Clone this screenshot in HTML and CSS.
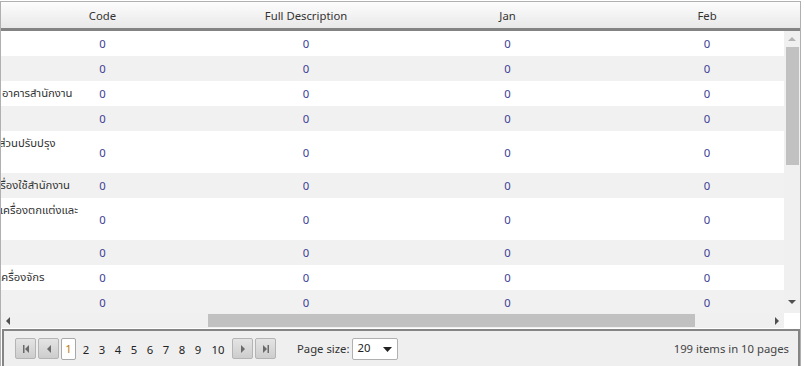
FILE: index.html
```html
<!DOCTYPE html>
<html>
<head>
<meta charset="utf-8">
<link rel="stylesheet" href="styles.css">
</head>
<body>
<div class="grid">
  <div class="head">
    <div class="hc c1">Code</div>
    <div class="hc c2">Full Description</div>
    <div class="hc c3">Jan</div>
    <div class="hc c4">Feb</div>
  </div>
  <div class="middle">
    <div class="viewport">
      <div class="row"><div class="txt"></div><div class="v c1">0</div><div class="v c2">0</div><div class="v c3">0</div><div class="v c4">0</div></div>
      <div class="row alt"><div class="txt"></div><div class="v c1">0</div><div class="v c2">0</div><div class="v c3">0</div><div class="v c4">0</div></div>
      <div class="row"><div class="txt"><span class="t0">อาคารสำนักงาน</span></div><div class="v c1">0</div><div class="v c2">0</div><div class="v c3">0</div><div class="v c4">0</div></div>
      <div class="row alt"><div class="txt"></div><div class="v c1">0</div><div class="v c2">0</div><div class="v c3">0</div><div class="v c4">0</div></div>
      <div class="row tall"><div class="txt top"><span class="t1">ส่วนปรับปรุง</span></div><div class="v c1">0</div><div class="v c2">0</div><div class="v c3">0</div><div class="v c4">0</div></div>
      <div class="row alt"><div class="txt"><span class="t2">เรื่องใช้สำนักงาน</span></div><div class="v c1">0</div><div class="v c2">0</div><div class="v c3">0</div><div class="v c4">0</div></div>
      <div class="row tall"><div class="txt top"><span class="t3">ะเครื่องตกแต่งและ</span></div><div class="v c1">0</div><div class="v c2">0</div><div class="v c3">0</div><div class="v c4">0</div></div>
      <div class="row alt"><div class="txt"></div><div class="v c1">0</div><div class="v c2">0</div><div class="v c3">0</div><div class="v c4">0</div></div>
      <div class="row"><div class="txt"><span class="t4">เครื่องจักร</span></div><div class="v c1">0</div><div class="v c2">0</div><div class="v c3">0</div><div class="v c4">0</div></div>
      <div class="row alt"><div class="txt"></div><div class="v c1">0</div><div class="v c2">0</div><div class="v c3">0</div><div class="v c4">0</div></div>
    </div>
    <div class="vscroll">
      <svg class="arr up" width="10" height="6" viewBox="0 0 10 6"><path d="M1 5 L5 1 L9 5 Z" fill="#b4b4b4"/></svg>
      <div class="vthumb"></div>
      <div class="vfill"></div>
      <svg class="arr down" width="10" height="6" viewBox="0 0 10 6"><path d="M1 1 L9 1 L5 5 Z" fill="#505050"/></svg>
    </div>
  </div>
  <div class="hscroll">
    <div class="htrack">
      <svg class="harr" width="6" height="10" viewBox="0 0 6 10"><path d="M5 1 L5 9 L1 5 Z" fill="#505050"/></svg>
      <div class="hgap1"></div>
      <div class="hthumb"></div>
      <div class="hgap2"></div>
      <svg class="harr" width="6" height="10" viewBox="0 0 6 10"><path d="M1 1 L5 5 L1 9 Z" fill="#505050"/></svg>
    </div>
    <div class="corner"></div>
  </div>
  <div class="pager">
    <span class="btn"><svg width="10" height="10" viewBox="0 0 10 10"><rect x="2" y="1" width="1.5" height="8" fill="#6a6a6a"/><path d="M8 1 L8 9 L4 5 Z" fill="#6a6a6a"/></svg></span>
    <span class="btn"><svg width="10" height="10" viewBox="0 0 10 10"><path d="M7 1 L7 9 L3 5 Z" fill="#6a6a6a"/></svg></span>
    <span class="pages">
      <span class="cur">1</span>
      <span class="pg">2</span>
      <span class="pg">3</span>
      <span class="pg">4</span>
      <span class="pg">5</span>
      <span class="pg">6</span>
      <span class="pg">7</span>
      <span class="pg">8</span>
      <span class="pg">9</span>
      <span class="pg ten">10</span>
    </span>
    <span class="btn"><svg width="10" height="10" viewBox="0 0 10 10"><path d="M3 1 L7 5 L3 9 Z" fill="#6a6a6a"/></svg></span>
    <span class="btn"><svg width="10" height="10" viewBox="0 0 10 10"><path d="M2 1 L6 5 L2 9 Z" fill="#6a6a6a"/><rect x="6.5" y="1" width="1.5" height="8" fill="#6a6a6a"/></svg></span>
    <span class="label">Page size:</span>
    <span class="select"><span class="sv">20</span><svg width="9" height="5" viewBox="0 0 9 5"><path d="M0 0 L9 0 L4.5 5 Z" fill="#222"/></svg></span>
    <span class="info">199 items in 10 pages</span>
  </div>
</div>
</body>
</html>
```
FILE: styles.css
```css
html, body {
  margin: 0;
  padding: 0;
  background: #fff;
}
body {
  font-family: "Noto Sans", "Noto Sans Thai", "Tlwg Typo", "Loma", "DejaVu Sans", sans-serif;
  font-size: 11.3px;
  color: #333;
}
.grid {
  box-sizing: border-box;
  width: 801px;
  height: 365px;
  margin-top: 1px;
  border: 1px solid #b0b0b0;
  border-bottom: none;
  display: flex;
  flex-direction: column;
  overflow: hidden;
}
.head {
  height: 26px;
  flex: none;
  display: grid;
  grid-template-columns: 203px 204px 199px 200px;
  align-items: center;
  background: linear-gradient(#fdfdfd, #e8e8e8);
  border-bottom: 3px solid #838383;
  overflow: hidden;
}
.hc {
  text-align: center;
  white-space: nowrap;
  color: #333;
}
.middle {
  height: 282px;
  flex: none;
  display: flex;
}
.viewport {
  flex: 1;
  overflow: hidden;
}
.row {
  height: 25px;
  display: grid;
  grid-template-columns: 0 203px 204px 199px 200px;
  align-items: center;
  background: #fff;
}
.row.alt {
  background: #f1f1f1;
}
.row.tall {
  height: 42px;
}
.txt {
  white-space: nowrap;
  overflow: visible;
  color: #333;
}
.txt.top {
  align-self: start;
  padding-top: 4px;
}
.t0 { margin-left: 1px; }
.t1 { margin-left: -2px; }
.t2 { margin-left: -4px; }
.t3 { margin-left: -5px; }
.t4 { margin-left: -3px; }
.v {
  text-align: center;
  color: #3c3c94;
}
.vscroll {
  width: 16px;
  flex: none;
  background: #f0f0f0;
  display: flex;
  flex-direction: column;
  align-items: center;
}
.arr.up {
  margin-top: 5px;
}
.vthumb {
  margin-top: 5px;
  width: 13px;
  height: 118px;
  background: #c1c1c1;
  margin-left: 1px;
}
.vfill {
  flex: 1;
}
.arr.down {
  margin-bottom: 8px;
}
.hscroll {
  height: 15px;
  flex: none;
  display: flex;
}
.htrack {
  flex: 1;
  background: #f0f0f0;
  display: flex;
  align-items: center;
}
.harr {
  flex: none;
  margin: 0 4px;
}
.hgap1 {
  width: 193px;
}
.hthumb {
  width: 487px;
  height: 13px;
  background: #c1c1c1;
}
.hgap2 {
  flex: 1;
}
.corner {
  width: 16px;
  background: #fff;
}
.pager {
  flex: 1;
  margin: 1px 0 0 1px;
  border: 2px solid #858585;
  border-bottom: none;
  background: #efefef;
  display: flex;
  align-items: flex-start;
  padding: 7px 9px 0 11px;
}
.btn {
  box-sizing: border-box;
  width: 21px;
  height: 21px;
  border: 1px solid #b4b4b4;
  border-radius: 2px;
  background: linear-gradient(#e4e4e4, #cdcdcd);
  display: flex;
  align-items: center;
  justify-content: center;
  margin-right: 2px;
}
.pages {
  display: flex;
  align-items: center;
  height: 22px;
  margin: 0 4px 0 0;
}
.cur {
  box-sizing: border-box;
  width: 15px;
  height: 22px;
  border: 1px solid #a8a8a8;
  border-radius: 2px;
  background: #fff;
  color: #c07a10;
  text-align: center;
  line-height: 20px;
  margin-right: 2px;
}
.pg {
  width: 16px;
  text-align: center;
  color: #222;
}
.pg.ten {
  width: 20px;
  margin-left: 2px;
}
.label {
  margin-left: 19px;
  line-height: 22px;
  color: #333;
}
.select {
  box-sizing: border-box;
  width: 46px;
  height: 22px;
  margin-left: 3px;
  border: 1px solid #b0b0b0;
  border-radius: 2px;
  background: #fff;
  display: flex;
  align-items: center;
  justify-content: space-between;
  padding: 0 5px 0 4px;
  color: #222;
}
.sv {
  line-height: 18px;
  margin-top: -2px;
}
.info {
  margin-left: auto;
  line-height: 22px;
  color: #444;
}
```
